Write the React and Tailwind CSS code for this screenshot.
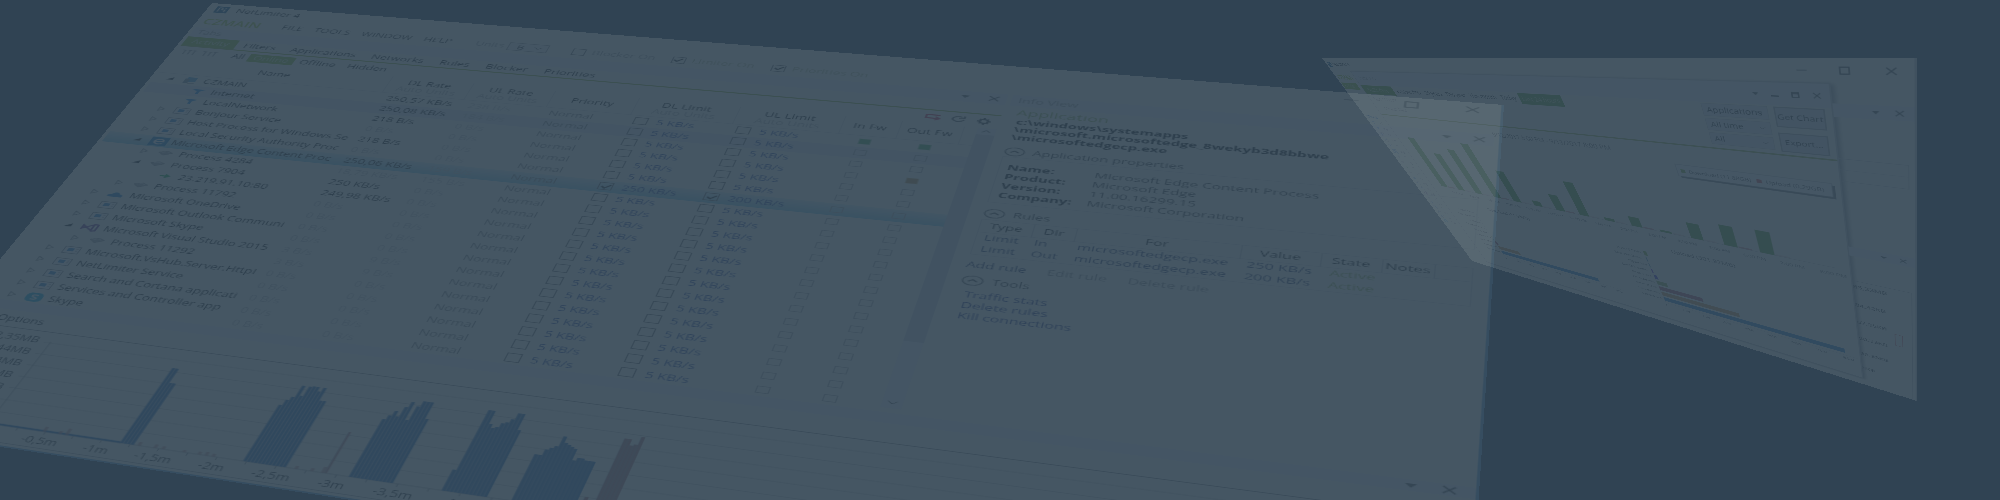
import React from "react";

/* ---------- perspective helper: maps a flat w×h window on four corner points ---------- */
function project([[x0, y0], [x1, y1], [x2, y2], [x3, y3]], w, h) {
  const dx1 = x1 - x2, dx2 = x3 - x2, sx = x0 - x1 + x2 - x3;
  const dy1 = y1 - y2, dy2 = y3 - y2, sy = y0 - y1 + y2 - y3;
  const det = dx1 * dy2 - dx2 * dy1;
  const g = (sx * dy2 - dx2 * sy) / det;
  const k = (dx1 * sy - sx * dy1) / det;
  const a = x1 - x0 + g * x1, b = x3 - x0 + k * x3;
  const d = y1 - y0 + g * y1, e = y3 - y0 + k * y3;
  return `matrix3d(${a / w},${d / w},0,${g / w},${b / h},${e / h},0,${k / h},0,0,1,0,${x0},${y0},0,1)`;
}

const MAIN_CORNERS = [[212, 3], [1504, 105], [1468, 669], [-138, 426]];
const STATS_CORNERS = [[1322, 58], [1917, 58], [1917, 401], [1472, 261]];

/* ---------- small drawings ---------- */
const Caret = ({ className = "h-[5px] w-2" }) => (
  <svg viewBox="0 0 10 6" className={className} aria-hidden="true"><path d="M0 0h10L5 6z" fill="#555" /></svg>
);
const Cross = ({ className = "size-2.5" }) => (
  <svg viewBox="0 0 12 12" className={className} aria-hidden="true"><path d="M1 1l10 10M11 1L1 11" stroke="#444" strokeWidth="1.6" /></svg>
);
const Chevron = () => (
  <svg viewBox="0 0 8 5" className="h-[5px] w-2" aria-hidden="true"><path d="M0.5 0.5L4 4 7.5 0.5" fill="none" stroke="#444" /></svg>
);
const Logo = () => (
  <svg viewBox="0 0 16 16" className="h-3.5 w-4" aria-hidden="true">
    <rect width="16" height="16" fill="#0a4f80" />
    <path d="M4 13V3M4 3h4v5h4v5M12 3v3" fill="none" stroke="#fff" strokeWidth="1.6" />
  </svg>
);
function TreeIcon({ kind }) {
  const box = "h-3.5 w-4 shrink-0";
  switch (kind) {
    case "pc":
      return <svg viewBox="0 0 16 14" className={box}><rect x="4" y="1" width="10" height="9" fill="#4a9ccf" /><rect x="2" y="4" width="5" height="9" fill="#7a8b99" /><path d="M7 13h7" stroke="#556" /></svg>;
    case "filter":
      return <svg viewBox="0 0 16 14" className={box}><path d="M1 3h14L10 7v5H7V7z" fill="#1a85d8" /></svg>;
    case "app":
      return <svg viewBox="0 0 16 14" className={box}><rect x="0.5" y="1.5" width="15" height="11" fill="#fff" stroke="#888" /><rect x="4" y="4" width="6" height="5" fill="#2a80cc" /><path d="M12 5h2M12 8h2" stroke="#888" /></svg>;
    case "edge":
      return <svg viewBox="0 0 16 14" className="h-4 w-[18px] shrink-0"><rect width="16" height="14" fill="#0b72bc" /><path d="M4 7h8c0-5-7-5-8 0 0 4 5 5 8 3" fill="none" stroke="#fff" strokeWidth="1.6" /></svg>;
    case "proc":
      return <svg viewBox="0 0 16 14" className={box}><path d="M1 6l8-3 6 3-8 5z" fill="#aaa" stroke="#888" /><path d="M4 6l5-2 3 2" stroke="#eee" fill="none" /></svg>;
    case "conn":
      return <svg viewBox="0 0 16 14" className={box}><path d="M3 6h5V3l6 4-6 4V8H3z" fill="#12aa3c" /></svg>;
    case "cloud":
      return <svg viewBox="0 0 16 14" className={box}><path d="M1 12c-2-4 2-5 3-4 1-5 7-5 8-1 4 0 4 5 2 5z" fill="#1679c5" /></svg>;
    case "vs":
      return <svg viewBox="0 0 16 14" className={box}><path d="M1 4l10 8V2L1 10zM11 1l4 1v10l-4 1" fill="none" stroke="#68318a" strokeWidth="2" /></svg>;
    case "skype":
      return <svg viewBox="0 0 16 14" className={box}><rect width="16" height="14" rx="5" fill="#0aaddb" /><path d="M11 4c-6-2-7 2-3 3s3 4-3 3" fill="none" stroke="#fff" strokeWidth="1.6" /></svg>;
    default:
      return null;
  }
}
const Twisty = ({ open }) => (
  <svg viewBox="0 0 10 10" className="size-[9px] shrink-0" aria-hidden="true">
    {open ? <path d="M9 2v6H1z" fill="#111" /> : <path d="M2 1l6 4-6 4z" fill="none" stroke="#666" />}
  </svg>
);

function Check({ label, on = false }) {
  return (
    <span className="inline-grid shrink-0 place-items-center">
      <input
        type="checkbox"
        aria-label={label}
        defaultChecked={on}
        className="col-start-1 row-start-1 size-[13px] appearance-none border border-[#666]"
      />
      {on && (
        <svg viewBox="0 0 12 12" className="pointer-events-none col-start-1 row-start-1 size-3"><path d="M2 6l3 3 5-6" fill="none" stroke="#111" strokeWidth="1.8" /></svg>
      )}
    </span>
  );
}

const Firewall = ({ label, fill = "border-[#aaa]" }) => (
  <input type="checkbox" aria-label={label} className={`block mx-auto h-2.5 w-[11px] appearance-none border ${fill}`} />
);

/* ---------- traffic list ---------- */
const rows = [
  [0, "pc", "open", "CZMAIN", "250,57 KB/s", "238 B/s"],
  [1, "filter", "", "Internet", "250,08 KB/s", "184 B/s"],
  [1, "filter", "", "LocalNetwork", "218 B/s", "0 B/s"],
  [1, "app", "shut", "Bonjour Service", "0 B/s", "0 B/s"],
  [1, "app", "shut", "Host Process for Windows Se", "218 B/s", "0 B/s"],
  [1, "app", "shut", "Local Security Authority Proc", "0 B/s", "0 B/s"],
  [1, "edge", "open", "Microsoft Edge Content Proc", "250,06 KB/s", "159 B/s"],
  [2, "proc", "shut", "Process 4284", "18,79 KB/s", "155 B/s"],
  [2, "proc", "open", "Process 7904", "250 KB/s", "0 B/s"],
  [3, "conn", "", "23.219.91.10:80", "249,98 KB/s", "0 B/s"],
  [2, "proc", "shut", "Process 11792", "0 B/s", "0 B/s"],
  [1, "cloud", "shut", "Microsoft OneDrive", "0 B/s", "0 B/s"],
  [1, "app", "shut", "Microsoft Outlook Communi", "0 B/s", "0 B/s"],
  [1, "app", "shut", "Microsoft Skype", "0 B/s", "0 B/s"],
  [1, "vs", "open", "Microsoft Visual Studio 2015", "3 B/s", "9 B/s"],
  [2, "proc", "shut", "Process 11292", "3 B/s", "9 B/s"],
  [1, "app", "shut", "Microsoft.VsHub.Server.HttpI", "0 B/s", "0 B/s"],
  [1, "app", "shut", "NetLimiter Service", "0 B/s", "0 B/s"],
  [1, "app", "shut", "Search and Cortana applicati", "0 B/s", "0 B/s"],
  [1, "app", "shut", "Services and Controller app", "0 B/s", "0 B/s"],
  [1, "skype", "shut", "Skype", "0 B/s", "0 B/s"],
];
const strong = new Set(["250,57 KB/s", "250,08 KB/s", "218 B/s", "250,06 KB/s", "250 KB/s", "249,98 KB/s"]);
const indent = ["pl-3", "pl-7", "pl-11", "pl-[60px]"];

function Limit({ value, on, label }) {
  return (
    <span className="flex items-center gap-2 pl-1.5 text-[#1f3c98]">
      <Check label={label} on={on} />
      {value}
    </span>
  );
}

function TrafficTable() {
  const th = "border-r border-[#ddd] p-0 align-middle font-normal leading-[13px]";
  return (
    <table className="w-full table-fixed border-collapse whitespace-nowrap">
      <colgroup>
        <col className="w-[232px]" /><col className="w-[81px]" /><col className="w-20" /><col className="w-20" />
        <col className="w-[94px]" /><col className="w-[95px]" /><col className="w-[50px]" /><col className="w-[54px]" /><col />
      </colgroup>
      <thead>
        <tr className="h-8 border-b border-[#ddd]">
          <th className={th}>Name</th>
          <th className={th}>DL Rate<div className="text-[#aaa]">Auto Units</div></th>
          <th className={th}>UL Rate<div className="text-[#aaa]">Auto Units</div></th>
          <th className={th}>Priority</th>
          <th className={th}>DL Limit<div className="text-[#aaa]">Auto Units</div></th>
          <th className={th}>UL Limit<div className="text-[#aaa]">Auto Units</div></th>
          <th className={th}>In Fw</th>
          <th className={th}>Out Fw</th>
          <th />
        </tr>
      </thead>
      <tbody>
        {rows.map(([level, kind, state, name, dl, ul], i) => {
          const selected = i === 6;
          const band = selected ? "bg-[linear-gradient(#d9eff5,#a6daea_60%,#82cbe6)]" : i === 1 ? "bg-[#e4e7f3]" : "";
          return (
            <tr key={name} className={`h-5 ${band}`}>
              <td className="p-0">
                <div className={`flex h-5 items-center ${indent[level]}`}>
                  <span className="flex w-[18px] shrink-0 items-center">{state && <Twisty open={state === "open"} />}</span>
                  <TreeIcon kind={kind} />
                  <span className={kind === "edge" ? "pl-1" : "pl-1.5"}>{name}</span>
                </div>
              </td>
              <td className={`p-0 pl-2 ${strong.has(dl) ? "" : "text-[#bbb]"}`}>{dl}</td>
              <td className="p-0 pl-2 text-[#c4c4c4]">{ul}</td>
              <td className="p-0 pl-1.5 text-[#777]">Normal</td>
              <td className="p-0"><Limit label={`Download limit of ${name}`} on={selected} value={selected ? "250 KB/s" : "5 KB/s"} /></td>
              <td className="p-0"><Limit label={`Upload limit of ${name}`} on={selected} value={selected ? "200 KB/s" : "5 KB/s"} /></td>
              <td className="p-0"><Firewall label={`Incoming firewall of ${name}`} fill={i === 0 ? "border-[#9aca9a] bg-[#3fa548]" : undefined} /></td>
              <td className="p-0"><Firewall label={`Outgoing firewall of ${name}`} fill={i === 0 ? "border-[#9aca9a] bg-[#3fa548]" : i === 3 ? "border-[#d8c090] bg-[#b98a42]" : undefined} /></td>
              <td />
            </tr>
          );
        })}
      </tbody>
    </table>
  );
}

/* ---------- history chart ---------- */
const groups = [
  { x: 221, step: 3, tops: [638, 638, 659, 659], color: "#2568b4" },
  { x: 327, step: 3, tops: [668, 660, 655, 638, 652, 638, 637, 637, 643, 637, 655, 655], color: "#2568b4" },
  { x: 415, step: 3, tops: [668, 662, 655, 662, 648, 640, 665, 645, 637, 637, 637, 660], color: "#2568b4" },
  { x: 490, step: 3, tops: [720, 637, 637, 655, 660, 658, 652, 650, 645, 636, 636, 658], color: "#2568b4" },
  { x: 545, step: 3, tops: [686, 686, 678, 675, 672, 658, 666, 668, 670, 672, 687, 683, 683, 685, 685, 685], color: "#2568b4" },
  { x: 606, step: 3, tops: [650, 650, 658, 656, 645], color: "#b07070" },
  { x: 395, step: 2, tops: [691], color: "#c08080" },
  { x: 594, step: 3, tops: [740, 730, 742, 736], color: "#b07070" },
];
const specks = [[152, 741], [166, 744], [172, 739], [236, 743], [250, 743], [257, 744], [275, 745], [288, 744], [294, 743], [300, 744], [370, 744], [383, 744], [392, 740]];
const xTicks = ["-0,5m", "-1m", "-1,5m", "-2m", "-2,5m", "-3m", "-3,5m", "-4m", "-4,5m", "-5m"];
const yTicks = ["2,35MB", "1,44MB", "1,04MB", "0,8MB", "512KB"];

function HistoryChart() {
  return (
    <svg viewBox="0 611 1200 158" className="h-[158px] w-full" role="img" aria-label="Traffic history">
      {[0, 1, 2, 3, 4, 5, 6].map((n) => <path key={n} d={`M97 ${626 + n * 17.4}H1190`} stroke="#999" strokeOpacity="0.55" />)}
      <path d="M103 624V748H1190" fill="none" stroke="#888" strokeOpacity="0.7" />
      <path d="M105 747H222" stroke="#2568b4" strokeWidth="2.5" />
      {xTicks.map((t, n) => <path key={t} d={`M${155 + n * 50} 748v4M${130 + n * 50} 748v4`} stroke="#999" />)}
      {groups.map((g) => g.tops.map((top, n) => (
        <g key={`${g.x}-${n}`}>
          <rect x={g.x + n * g.step} y={top} width={g.step} height={748 - top} fill={g.color} />
          <path d={`M${g.x + n * g.step} ${top}V748`} stroke="#9fb0c8" strokeWidth="0.4" />
        </g>
      )))}
      {specks.map(([x, y]) => <rect key={x} x={x} y={y} width="3" height={748 - y} fill="#c08080" fillOpacity="0.7" />)}
      <g fontSize="12" fill="#222">
        {yTicks.map((t, n) => <text key={t} x="92" y={628 + n * 18} textAnchor="end">{t}</text>)}
        {xTicks.map((t, n) => <text key={t} x={155 + n * 50} y="765" textAnchor="middle">{t}</text>)}
      </g>
    </svg>
  );
}

/* ---------- info panel ---------- */
const Section = ({ children, className }) => (
  <h3 className={`flex items-center gap-1.5 text-[#333] ${className}`}>
    <svg viewBox="0 0 18 16" className="h-4 w-[18px]" aria-hidden="true">
      <ellipse cx="9" cy="8" rx="8" ry="7" fill="none" stroke="#555" strokeWidth="1.2" />
      <path d="M5.5 9.5L9 6.5l3.5 3" fill="none" stroke="#333" strokeWidth="1.6" />
    </svg>
    {children}
  </h3>
);

function InfoPanel() {
  const props = [["Name:", "Microsoft Edge Content Process"], ["Product:", "Microsoft Edge"], ["Version:", "11.00.16299.15"], ["Company:", "Microsoft Corporation"]];
  const th = "border-r border-[#ccc] p-0 text-center font-normal";
  return (
    <aside className="min-w-0 flex-1">
      <PanelHead title="Info View" />
      <div className="px-2">
        <h2 className="h-[22px] text-[15px] leading-[22px] text-[#8fae4a]">Application</h2>
        <p className="pl-0.5 font-bold leading-[14px]">c:\windows\systemapps<br />\microsoft.microsoftedge_8wekyb3d8bbwe<br />\microsoftedgecp.exe</p>
        <Section className="mt-2 h-[19px]">Application properties</Section>
        <dl className="grid grid-cols-[72px_1fr] border border-[#ddd] pt-2.5 pr-1 pb-1 pl-1.5 leading-4">
          {props.map(([k, v]) => <React.Fragment key={k}><dt className="font-bold">{k}</dt><dd className="text-[#333]">{v}</dd></React.Fragment>)}
        </dl>
        <Section className="mt-2 h-5">Rules</Section>
        <div className="border border-[#ddd]">
          <table className="w-full table-fixed border-collapse whitespace-nowrap">
            <colgroup><col className="w-[42px]" /><col className="w-[34px]" /><col className="w-32" /><col className="w-[60px]" /><col className="w-[45px]" /><col className="w-[38px]" /><col /></colgroup>
            <thead><tr className="h-5 border-b border-[#ddd]">{["Type", "Dir", "For", "Value", "State", "Notes"].map((t) => <th key={t} className={th}>{t}</th>)}<th /></tr></thead>
            <tbody>
              {[["In", "250 KB/s"], ["Out", "200 KB/s"]].map(([dir, v]) => (
                <tr key={dir} className="h-[18px] text-[#1c2c60]">
                  <td className="p-0 pl-1.5">Limit</td><td className="p-0 pl-1">{dir}</td><td className="p-0 pl-1">microsoftedgecp.exe</td>
                  <td className="p-0 pl-1.5">{v}</td><td className="p-0 pl-2 text-[#8fae4a]">Active</td><td /><td />
                </tr>
              ))}
            </tbody>
          </table>
        </div>
        <div className="flex h-8 items-center gap-4 whitespace-nowrap">
          <button type="button" className="text-[#111f55]">Add rule</button>
          <button type="button" className="text-[#888]">Edit rule</button>
          <button type="button" className="text-[#888]">Delete rule</button>
        </div>
        <Section className="h-4">Tools</Section>
        <nav className="mt-1.5 flex flex-col items-start pl-1.5 leading-4 text-[#1a2a80]">
          <a href="#stats">Traffic stats</a><a href="#delete">Delete rules</a><a href="#kill">Kill connections</a>
        </nav>
      </div>
    </aside>
  );
}

function PanelHead({ title, size = "h-5 px-1.5" }) {
  return (
    <header className={`flex shrink-0 items-center bg-[#eef0f8] text-[#999] ${size}`}>
      <span className="flex-1">{title}</span>
      <button type="button" aria-label="Panel menu"><Caret /></button>
      <button type="button" aria-label="Close panel" className="ml-4"><Cross /></button>
    </header>
  );
}

function WindowButtons() {
  return (
    <div className="ml-auto flex items-center gap-9">
      <button type="button" aria-label="Minimize"><svg viewBox="0 0 12 12" className="size-3"><path d="M0 6h12" stroke="#444" /></svg></button>
      <button type="button" aria-label="Maximize"><svg viewBox="0 0 12 12" className="size-3"><path d="M1 1h10v10H1z" fill="none" stroke="#333" strokeWidth="1.4" /></svg></button>
      <button type="button" aria-label="Close"><Cross className="size-3" /></button>
    </div>
  );
}

const Bars3 = () => (
  <svg viewBox="0 0 18 14" className="h-3 w-4" aria-hidden="true"><path d="M0 2h5M7 2h4M13 2h5M3 2v10M9 2v10M15 2v10" stroke="#888" strokeWidth="1.4" /></svg>
);

function MainWindow() {
  return (
    <section
      aria-label="NetLimiter 4"
      className="absolute top-0 left-0 flex h-[776px] w-[1200px] origin-top-left flex-col border-r-2 border-b-2 border-[#5f9fd0] bg-[#fffff4] text-xs text-black opacity-10 will-change-transform"
      style={{ transform: project(MAIN_CORNERS, 1200, 776) }}
    >
      <header className="flex h-[26px] shrink-0 items-center gap-2 pr-4 pl-2">
        <Logo /><h1>NetLimiter 4</h1><WindowButtons />
      </header>
      <div className="flex h-7 shrink-0 items-center pl-[7px] whitespace-nowrap">
        <span className="w-[85px] text-base font-semibold text-[#a3c828]">CZMAIN</span>
        <nav className="flex items-center gap-3 text-[#222]">
          <button type="button">FILE</button><button type="button">TOOLS</button><button type="button">WINDOW</button><button type="button">HELP</button>
        </nav>
        <label className="ml-6 flex items-center gap-1 text-[#999]">
          Units
          <span className="inline-grid items-center">
            <select defaultValue="B" className="col-start-1 row-start-1 h-4 w-10 appearance-none border border-[#999] bg-[#f2f2f2] pl-2 text-[11px] leading-none text-black"><option>B</option></select>
            <span className="pointer-events-none col-start-1 row-start-1 mr-1.5 justify-self-end"><Chevron /></span>
          </span>
        </label>
        <div className="ml-6 flex items-center gap-4 text-[#b0b88a]">
          <span className="flex items-center gap-1.5 text-[#999]"><Check label="Blocker On" />Blocker On</span>
          <span className="flex items-center gap-1.5"><Check label="Limiter On" on />Limiter On</span>
          <span className="flex items-center gap-1.5"><Check label="Priorities On" on />Priorities On</span>
        </div>
      </div>
      <main className="flex h-[517px] shrink-0 gap-1 overflow-hidden px-1">
        <div className="w-[794px] shrink-0">
          <PanelHead title="Tabs" />
          <nav className="flex h-[21px] items-center gap-4 border-b-2 border-[#93b03b] whitespace-nowrap">
            <button type="button" className="h-full w-14 bg-[#86bc28] text-[#dcecb0]">Activity</button>
            <button type="button" className="-ml-2">Filters</button>
            {["Applications", "Networks", "Rules", "Blocker", "Priorities"].map((t) => <button key={t} type="button">{t}</button>)}
          </nav>
          <div className="flex h-6 items-center pr-1.5 pl-1.5">
            <Bars3 /><span className="w-1.5" /><Bars3 />
            <button type="button" className="mr-1 ml-4">All</button>
            <button type="button" className="h-4 w-12 bg-[#86bc28] leading-4 text-[#dcecb0]">Online</button>
            <button type="button" className="ml-1.5">Offline</button>
            <button type="button" className="ml-3">Hidden</button>
            <div className="ml-auto flex gap-2">
              <svg viewBox="0 0 14 12" className="h-3 w-3.5"><path d="M13 2H1v6h12M9 5l4 3-4 3" fill="none" stroke="#d02040" strokeWidth="1.8" /></svg>
              <svg viewBox="0 0 14 12" className="h-3 w-3.5"><path d="M12 6a5 4.500 0 1 1-2-4M7 4h5V0" fill="none" stroke="#444" strokeWidth="1.7" /></svg>
              <svg viewBox="0 0 14 12" className="h-3 w-3.5"><circle cx="7" cy="6" r="3.5" fill="none" stroke="#333" strokeWidth="2" /><path d="M7 0v2M7 10v2M1 6h2M11 6h2M3 2l1 1M11 10l-1-1M3 10l1-1M11 2l-1 1" stroke="#333" strokeWidth="2" /></svg>
            </div>
          </div>
          <div className="flex">
            <div className="w-[778px] shrink-0"><TrafficTable /></div>
            <div className="flex h-[446px] w-4 shrink-0 flex-col items-center bg-[#eceef6]">
              <span className="flex h-3 rotate-180 items-center"><Chevron /></span>
              <div className="h-[339px] w-4 bg-[#cdd0dc]" />
              <span className="mt-auto flex h-4 items-center"><Chevron /></span>
            </div>
          </div>
        </div>
        <InfoPanel />
      </main>
      <PanelHead title="" size="h-3.5 pl-1.5 pr-3" />
      <div className="flex h-[26px] shrink-0 items-center border-b border-[#888] pl-10"><button type="button">Options</button></div>
      <HistoryChart />
      <div className="mt-auto h-1 border-t border-[#aaa]" />
    </section>
  );
}

/* ---------- statistics window ---------- */
const hourly = [237, 282, 260, 233, 309, 394, 359, 307, 402, 382, 405, 366, 354, 350];
const hours = ["7:00 AM", "8:00 AM", "9:00 AM", "10:00 AM", "11:00 AM", "12:00 PM", "12:00 PM", "1:00 PM", "2:00 PM", "3:00 PM", "4:00 PM", "5:00 PM", "6:00 PM", "7:00 PM", "8:00 PM"];
const appNames = ["Host of Tasks", "SearchIndexer...", "Skype.exe", "OneDrive.exe...", "Firefox.exe", "Chrome.exe", "svchost.exe", "msedge.exe", "System.exe"];
const uploads = [[8, "#7fae2e"], [2, "#48a"], [2, "#48a"], [3, "#62c"], [8, "#43c"], [26, "#8fae50"], [104, "#b05868"], [180, "#d09850"], [379, "#2a80cc"]];
const downloads = [[0, "#8a2"], [0, "#8a2"], [0, "#8a2"], [0, "#8a2"], [0, "#8a2"], [1, "#8a2"], [8, "#b05868"], [80, "#d09850"], [332, "#2a80cc"]];

function StatsChart() {
  return (
    <svg viewBox="80 168 1031 584" className="min-h-0 w-full flex-1" role="img" aria-label="Traffic per hour">
      <text x="592" y="198" fontSize="16" textAnchor="middle" fill="#555">9/12/2017 8:00 PM - 9/13/2017 8:00 PM</text>
      <g fontSize="11">
        <rect x="862" y="217" width="242" height="28" fill="#777" />
        <rect x="858" y="213" width="242" height="28" fill="#fff" stroke="#aaa" />
        <rect x="865" y="224" width="8" height="8" fill="#7fae2e" /><text x="879" y="232" fill="#444">Download (11.88GB)</text>
        <rect x="992" y="224" width="8" height="8" fill="#d04848" /><text x="1006" y="232" fill="#444">Upload (0.29GB)</text>
      </g>
      <path d="M118 411H1090" stroke="#bbb" />
      {hourly.map((top, n) => (
        <g key={n}>
          <rect x={123 + n * 65} y={top} width="25" height={411 - top} fill="#5a9c2c" />
          <rect x={150 + n * 65} y="407" width="24" height="4" fill="#c66" fillOpacity={n % 3 === 0 ? 0.7 : 0.2} />
        </g>
      ))}
      <g fontSize="11" fill="#666" textAnchor="middle">{hours.map((t, n) => <text key={n} x={175 + n * 65} y="433">{t}</text>)}</g>
      <g fill="#555">
        <text x="258" y="476" fontSize="15">Download (11.88GB)</text>
        <text x="779" y="476" fontSize="15">Upload (301.97MB)</text>
      </g>
      {[[193, downloads], [707, uploads]].map(([x0, list]) => (
        <g key={x0}>
          <path d={`M${x0} 492V684H${x0 + 400}`} fill="none" stroke="#ccc" />
          {list.map(([w, c], n) => <rect key={n} x={x0} y={493 + n * 21} width={w} height="15" fill={c} />)}
          <g fontSize="10" fill="#444" textAnchor="end">{appNames.map((t, n) => <text key={t} x={x0 - 6} y={504 + n * 21}>{t}</text>)}</g>
          <g fontSize="10" fill="#555" textAnchor="middle">{["0", "1GB", "2GB", "3GB", "4GB", "5GB", "6GB", "7GB", "8GB"].map((t, n) => <text key={t} x={x0 + n * 48} y="698">{t}</text>)}</g>
        </g>
      ))}
    </svg>
  );
}

function Picker({ label, value }) {
  return (
    <span className="inline-grid items-center">
      <select aria-label={label} defaultValue={value} className="col-start-1 row-start-1 h-6 w-[95px] appearance-none border border-[#ccc] bg-[#e9ebf3] px-1.5 text-sm leading-none text-[#222]"><option>{value}</option></select>
      <span className="pointer-events-none col-start-1 row-start-1 mr-2 justify-self-end"><Chevron /></span>
    </span>
  );
}

function StatsWindow() {
  const button = "h-9 w-16 border-2 border-[#aaa] bg-[#dfe1ea] text-[13px] text-[#222]";
  return (
    <section
      aria-label="Traffic statistics"
      className="absolute top-0 left-0 flex h-[776px] w-[1200px] origin-top-left flex-col border-r-2 border-[#ccc] bg-[#fffff4] text-xs text-black opacity-10 will-change-transform"
      style={{ transform: project(STATS_CORNERS, 1200, 776) }}
    >
      <header className="flex h-9 shrink-0 items-center gap-1 pr-4 pl-1.5"><Logo /><h2>NetLimiter 4</h2><WindowButtons /></header>
      <div className="flex min-h-0 flex-1">
        <div className="w-20 shrink-0 overflow-hidden pt-2 pl-2 whitespace-nowrap">
          <div className="h-7 text-base leading-6 font-semibold text-[#a3c828]">CZMAIN</div>
          <div className="-ml-1 h-5 w-16 bg-[#86bc28] pl-2 leading-5 text-[#dcecb0]">Activity</div>
          <div className="flex h-24 flex-col justify-end text-[#1566a8]">CZMAIN</div>
          {rows.slice(1).map(([, kind, , name], i) => <div key={name} className="flex h-5 items-center gap-4 text-[#999]"><span className="pl-1 opacity-50"><TreeIcon kind={kind} /></span>{i % 2 ? "0 B" : "12"}</div>)}
        </div>
        <div className="mb-6 flex min-w-0 flex-1 flex-col border-2 border-[#ccc] bg-[#fffff4] shadow-[4px_2px_6px_#999]">
          <header className="flex h-[38px] shrink-0 items-center gap-4 bg-[#f1f3f8] pr-2.5 pl-3.5 text-[#888]">
            <span className="flex-1">Traffic stats</span>
            <Caret /><svg viewBox="0 0 10 10" className="size-2.5"><path d="M0 8h10" stroke="#333" strokeWidth="2" /></svg>
            <svg viewBox="0 0 10 10" className="size-2.5"><path d="M1 1h8v8H1zM1 3h8" fill="none" stroke="#333" strokeWidth="1.6" /></svg><Cross />
          </header>
          <div className="flex h-[92px] shrink-0 justify-between border-b-3 border-[#9fb848] pr-2">
            <div className="pt-px">
              <nav className="flex h-[26px] items-center gap-3 text-sm whitespace-nowrap text-[#222]">
                <button type="button" className="h-full w-[117px] bg-[#6cab24] px-4 text-left text-[#dcecb0]">Traffic chart</button>
                {["Custom filter", "30 years", "This year", "This month", "Today"].map((t) => <button key={t} type="button">{t}</button>)}
                <button type="button" className="-ml-1 h-full bg-[#5a9c2c] px-1.5 text-[#b9dc9a]">Last 24 hours</button>
              </nav>
              <div className="flex flex-col gap-2 pt-1 pl-4 text-sm text-[#888]"><span>Last 24 hours</span><span className="pl-4">Custom filter</span></div>
            </div>
            <div className="flex gap-2 pt-0.5">
              <div className="flex flex-col gap-1"><Picker label="Group by" value="Applications" /><Picker label="Period" value="All time" /><Picker label="Zone" value="All" /></div>
              <div className="flex flex-col gap-2.5"><button type="button" className={button}>Get Chart</button><button type="button" className={button}>Export...</button></div>
            </div>
          </div>
          <StatsChart />
        </div>
        <div className="flex w-[87px] shrink-0 flex-col">
          <div className="h-8" />
          <div className="flex h-[22px] items-center justify-end gap-4 bg-[#eef0f8] pr-2.5"><Caret /><Cross /></div>
          <div className="mt-[72px] mr-1.5 h-11 border border-l-0 border-[#ccc] pt-5"><div className="border-t border-[#ddd]" /></div>
          <div className="mt-[142px] flex h-[22px] shrink-0 items-center justify-end gap-4 bg-[#eef0f8] pr-2.5"><Caret /><Cross /></div>
          <div className="mt-16 mr-1 flex flex-1 border-t border-r border-[#bbb]">
            <ul className="flex flex-col gap-9 pt-2 text-[#333]">{["85,33MB", "84,32KB", "67,35KB", "50,33KB", "33,35KB", "8KB"].map((t) => <li key={t}>{t}</li>)}</ul>
            <div className="mt-32 ml-2 h-9 w-3 border border-[#d66]" />
          </div>
        </div>
      </div>
    </section>
  );
}

export default function App() {
  return (
    <div className="relative h-screen w-full overflow-hidden bg-[#304353] font-['Open_Sans','Noto_Sans',sans-serif]">
      <StatsWindow />
      <MainWindow />
    </div>
  );
}
